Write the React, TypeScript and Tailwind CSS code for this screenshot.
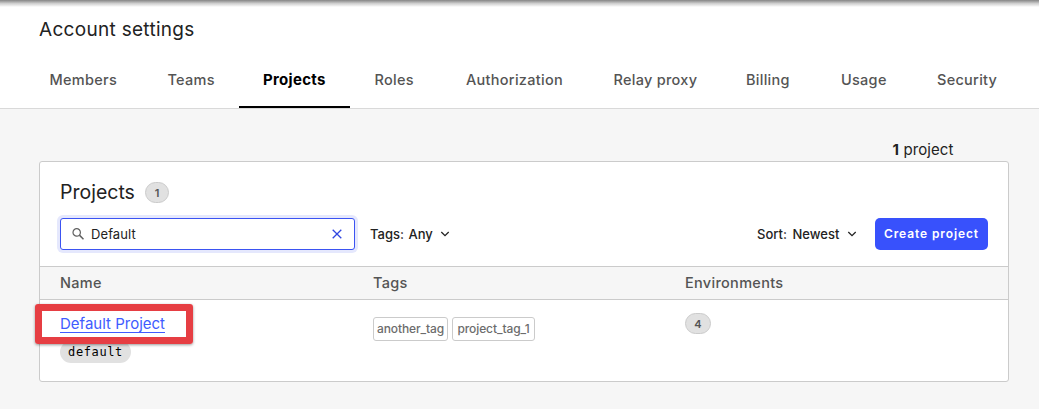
import React from 'react';

type Tab = { label: string; cell: string; active?: boolean };

const tabs: Tab[] = [
  { label: 'Members', cell: 'w-[118px] pl-[23.5px]' },
  { label: 'Teams', cell: 'w-[95px] pl-[23.5px]' },
  { label: 'Projects', cell: 'w-[111px] pl-6', active: true },
  { label: 'Roles', cell: 'w-[92px] pl-[24.5px]' },
  { label: 'Authorization', cell: 'w-[148px] pl-6' },
  { label: 'Relay proxy', cell: 'w-[132px] pl-[23.5px]' },
  { label: 'Billing', cell: 'w-[95px] pl-6' },
  { label: 'Usage', cell: 'w-[96px] pl-6' },
  { label: 'Security', cell: 'w-[108px] pl-6' },
];

function Chevron() {
  return (
    <svg viewBox="0 0 10 8" className="h-2 w-2.5" fill="none" stroke="#222" strokeWidth="1.3">
      <path d="M1.3 2 5 5.6 8.7 2" />
    </svg>
  );
}

function Header() {
  return (
    <header className="h-[109px] border-b border-[#d9d9d9] bg-white">
      <div className="h-[7px] bg-linear-to-b from-[#858585] via-[#cfcfcf] to-white" />
      <h1 className="mt-[9px] ml-[39px] h-7 text-[19px] leading-7 tracking-[0.3px] text-[#222]">Account settings</h1>
      <nav className="mt-2 ml-[26px] flex h-14">
        {tabs.map((t) => (
          <a
            key={t.label}
            className={`${t.cell} h-14 shrink-0 pt-[18px] leading-5 whitespace-nowrap ${
              t.active
                ? 'border-b-2 border-black text-[15px] font-bold tracking-[0.3px] text-black'
                : 'text-[14.5px] font-medium tracking-[0.28px] text-[#545454]'
            }`}
          >
            {t.label}
          </a>
        ))}
      </nav>
    </header>
  );
}

export default function App() {
  return (
    <div className="h-[409px] w-[1039px] overflow-hidden bg-[#f6f6f6] font-['Inter',sans-serif] text-[#222]">
      <Header />
      <main className="w-[1009px] pl-[39px]">
        <div className="flex h-[52px] items-start pt-[29px] pl-[853.5px] text-[15px] leading-6 tracking-[0.1px]">
          <span className="whitespace-nowrap"><b>1</b> project</span>
        </div>
        <section className="h-[221px] rounded-[3px] border border-[#cbcbcb] bg-white">
          <div className="h-[104px] px-5 pt-4">
            <div className="flex h-7 items-center">
              <h2 className="w-[85px] text-[19.5px] leading-7">Projects</h2>
              <span className="flex h-[21px] w-6 items-center justify-center rounded-full border border-[#cbcbcb] bg-[#e1e1e1] pt-0.5 text-[11px] font-semibold text-[#545454]">1</span>
            </div>
            <div className="mt-3 flex h-8 items-center text-[13px]">
              <div className="flex h-8 w-[295px] items-center rounded-[3px] border border-[#3b53f2] bg-white shadow-[0_0_0_3px_#e5e8fd]">
                <svg viewBox="0 0 12 12" className="ml-[11px] h-3 w-3" fill="none" stroke="#606060" strokeWidth="1.2">
                  <circle cx="4.7" cy="4.4" r="3.7" />
                  <path d="m7.4 7.1 4.1 4.1" strokeWidth="1.5" />
                </svg>
                <span className="ml-[7px] w-[241px] pt-0.5 tracking-[0.1px]">Default</span>
                <svg viewBox="0 0 10 10" className="h-2.5 w-2.5" fill="none" stroke="#3046e0" strokeWidth="1.3">
                  <path d="m.7.7 8.6 8.6M9.3.7.7 9.3" />
                </svg>
              </div>
              <div className="ml-[15px] flex w-[387px] items-center font-medium">
                <span className="w-[38.5px] pt-0.5">Tags:</span>
                <span className="w-[31.5px] pt-0.5">Any</span>
                <Chevron />
              </div>
              <div className="flex w-[118px] items-center font-medium">
                <span className="w-[35.5px] pt-0.5">Sort:</span>
                <span className="w-[54.5px] pt-0.5">Newest</span>
                <Chevron />
              </div>
              <button className="h-8 w-[113px] shrink-0 rounded-[5px] bg-[#3851fc] text-[12px] font-semibold tracking-[0.9px] whitespace-nowrap text-white">
                Create project
              </button>
            </div>
          </div>
          <div className="grid h-[34px] grid-cols-[313px_312px_1fr] items-center border-y border-[#cbcbcb] bg-[#f6f6f6] pl-5 text-[14.5px] font-medium tracking-[0.3px] text-[#545454]">
            <span>Name</span>
            <span>Tags</span>
            <span>Environments</span>
          </div>
          <div className="grid grid-cols-[313px_312px_1fr] pl-5">
            <div className="relative pt-[14px]">
              <a className="block text-[15px] leading-5 text-[#405bff] underline decoration-1 underline-offset-[3px]">Default Project</a>
              <code className="mt-[7px] flex h-[22px] w-[71px] items-center justify-center rounded-full bg-[#e1e1e1] font-['DejaVu_Sans_Mono',monospace] text-[12px] tracking-[0.6px] text-black">default</code>
              <div className="absolute top-[4px] -left-[25px] h-10 w-[158px] rounded-[3px] border-[7px] border-[#e63e43] shadow-[0_1px_3px_rgba(0,0,0,0.4)]" />
            </div>
            <div className="flex gap-1 pt-[17px] text-[12px] font-medium tracking-[-0.1px] text-[#6c6c6c]">
              <span className="flex h-6 w-[75px] items-center justify-center rounded-[3px] border border-[#cbcbcb]">another_tag</span>
              <span className="flex h-6 w-[83px] items-center justify-center rounded-[3px] border border-[#cbcbcb]">project_tag_1</span>
            </div>
            <div className="pt-[13px]">
              <span className="flex h-[21px] w-[26px] items-center justify-center rounded-full border border-[#cbcbcb] bg-[#e1e1e1] pt-0.5 text-[11px] font-semibold text-[#545454]">4</span>
            </div>
          </div>
        </section>
      </main>
    </div>
  );
}
